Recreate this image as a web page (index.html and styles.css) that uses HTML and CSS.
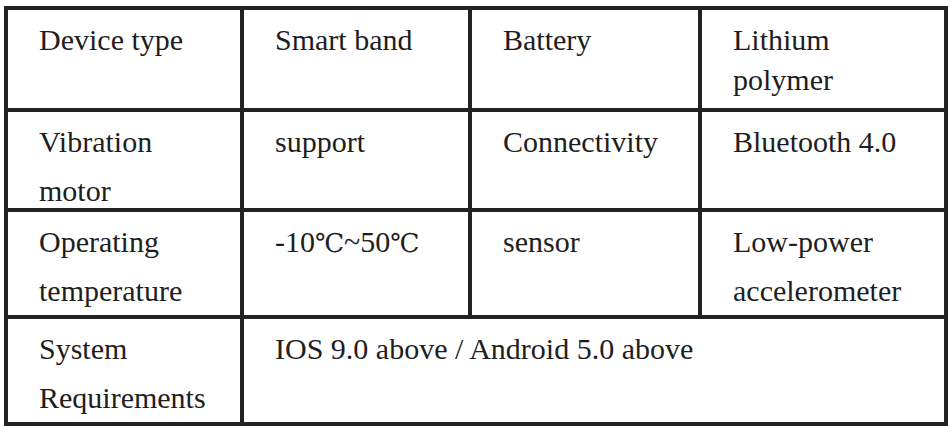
FILE: index.html
```html
<!DOCTYPE html>
<html>
<head>
<meta charset="utf-8">
<link rel="stylesheet" href="styles.css">
</head>
<body>
<div class="spec">
  <div class="cell r1">Device type</div>
  <div class="cell r1">Smart band</div>
  <div class="cell r1">Battery</div>
  <div class="cell r1">Lithium polymer</div>

  <div class="cell">Vibration motor</div>
  <div class="cell">support</div>
  <div class="cell">Connectivity</div>
  <div class="cell">Bluetooth 4.0</div>

  <div class="cell">Operating temperature</div>
  <div class="cell">-10<span class="deg">℃</span>~50<span class="deg">℃</span></div>
  <div class="cell">sensor</div>
  <div class="cell">Low-power accelerometer</div>

  <div class="cell">System Requirements</div>
  <div class="cell span3">IOS 9.0 above / Android 5.0 above</div>
</div>
</body>
</html>
```
FILE: styles.css
```css
body {
  margin: 6px 0 0 4px;
  background: #ffffff;
}

.spec {
  display: grid;
  grid-template-columns: 236px 228px 230px 246px;
  grid-template-rows: 102px 100px 107px 107px;
  width: 940px;
  border-left: 4px solid #222222;
  border-top: 4px solid #222222;
  font-family: "Liberation Serif", "Times New Roman", serif;
  font-size: 30px;
  color: #1e1e1e;
}

.cell {
  border-right: 4px solid #222222;
  border-bottom: 4px solid #222222;
  padding: 5px 30px 0 31px;
  line-height: 49px;
}

.cell.r1 {
  line-height: 40px;
  padding-top: 10px;
}

.deg {
  font-family: "DejaVu Serif", serif;
  font-size: 26px;
}

.span3 {
  grid-column: span 3;
}
```
